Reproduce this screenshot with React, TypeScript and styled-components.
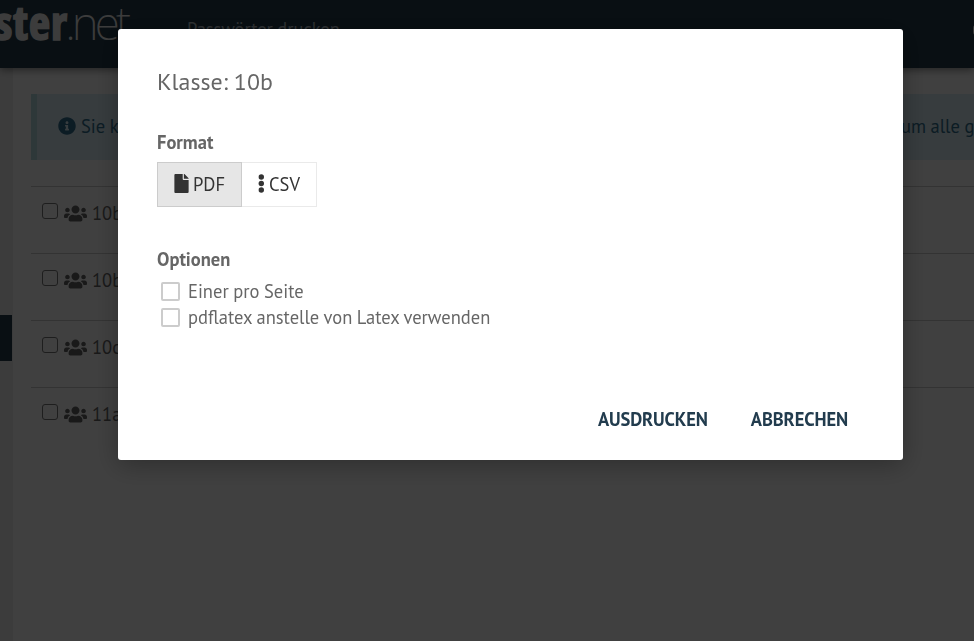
import React from "react";
import styled, { createGlobalStyle } from "styled-components";
import { FaUsers, FaFile, FaInfoCircle } from "react-icons/fa";

const GlobalStyle = createGlobalStyle`
  * { box-sizing: border-box; }
  html, body { margin: 0; height: 100%; overflow: hidden; background: #fff; }
  body, button { font-family: "PT Sans", "Open Sans", "Noto Sans", sans-serif; word-spacing: -0.4px; }
`;

const Page = styled.div`
  width: 974px;
  height: 641px;
  display: flex;
  flex-direction: column;
  overflow: hidden;
  color: #666;
`;

const Header = styled.header`
  height: 68px;
  flex: none;
  display: flex;
  align-items: flex-start;
  background: #243c4c;
  box-shadow: 0 2px 8px rgba(0, 0, 0, 0.45);
  z-index: 1;
  overflow: hidden;
`;

const Logo = styled.div`
  width: 136px;
  height: 48px;
  margin: -2px 0 0 -5px;
  flex: none;
  display: flex;
  font-family: "Open Sans", "Noto Sans", sans-serif;
  font-size: 46px;
  line-height: 48px;
  letter-spacing: 1.1px;
  font-stretch: 84%;
  color: #f0f0f0;
  font-weight: 700;
  -webkit-text-stroke: 1.6px #f0f0f0;
  white-space: nowrap;
`;

const LogoLight = styled.span`
  margin-left: -3px;
  font-family: "Noto Sans", "Open Sans", sans-serif;
  font-weight: 200;
  font-stretch: 75%;
  letter-spacing: -3.9px;
  -webkit-text-stroke: 0;
`;

const HeaderTitle = styled.div`
  margin: 16px 0 0 56px;
  font-size: 18.4px;
  line-height: 26px;
  color: #b8c4cc;
`;

const HeaderMark = styled.div`
  width: 10px;
  height: 10px;
  flex: none;
  margin: 25px -9px 0 auto;
  border-radius: 3px;
  background: #ddd;
`;

const Body = styled.div`
  flex: 1;
  display: flex;
`;

const Sidebar = styled.nav`
  width: 13px;
  flex: none;
  background: #f0f0f0;
  border-right: 1px solid #f0f0f0;
  padding-top: 247px;
`;

const ActiveItem = styled.div`
  width: 12px;
  height: 46px;
  background: #243c4c;
`;

const Main = styled.main`
  flex: 1;
  min-width: 0;
  padding: 26px 0 0 18px;
`;

const Alert = styled.div`
  height: 66px;
  display: flex;
  align-items: center;
  padding: 0 0 2px 21px;
  border-left: 6px solid #b8dfe2;
  background: #d9edf7;
  color: #31708f;
  font-size: 18.5px;
  white-space: nowrap;
  svg { width: 18px; height: 18px; margin-right: 5px; }
`;

const AlertEnd = styled.span`
  margin-left: auto;
  width: 73px;
`;

const List = styled.div`
  margin-top: 26px;
`;

const Row = styled.div`
  height: 67px;
  border-top: 1px solid #ccc;
  display: flex;
  align-items: flex-start;
  padding: 16px 0 0 11px;
  font-size: 18.5px;
  line-height: 20px;
  svg { width: 23px; height: 19px; margin: 1px 5px 0 6px; color: #666; }
`;

const RowCheck = styled.span`
  width: 16px;
  height: 16px;
  border: 1px solid #777;
  border-radius: 3px;
`;

const Backdrop = styled.div`
  position: fixed;
  inset: 0;
  z-index: 5;
  display: flex;
  align-items: flex-start;
  background: rgba(0, 0, 0, 0.75);
`;

const Dialog = styled.section`
  width: 785px;
  height: 431px;
  margin: 29px 0 0 118px;
  padding: 37px 39px 0;
  display: flex;
  flex-direction: column;
  border-radius: 3px;
  background: #fff;
  color: #666;
  box-shadow: 0 5px 26px rgba(0, 0, 0, 0.3);
`;

const Title = styled.h1`
  margin: 0;
  font-size: 23.9px;
  font-weight: 400;
  line-height: 32px;
`;

const Heading = styled.h2<{ $gap: number }>`
  margin: ${(p) => p.$gap}px 0 0;
  font-size: 18.5px;
  font-weight: 700;
  line-height: 24px;
`;

const Formats = styled.div`
  display: flex;
  margin-top: 8px;
`;

const FormatButton = styled.button<{ $active?: boolean }>`
  width: ${(p) => (p.$active ? 85 : 75)}px;
  height: 45px;
  padding: 0 0 2px 16px;
  display: flex;
  align-items: center;
  gap: 4px;
  border: 1px solid ${(p) => (p.$active ? "#ccc" : "#eaeaea")};
  border-left-width: ${(p) => (p.$active ? 1 : 0)}px;
  background: ${(p) => (p.$active ? "#e6e6e6" : "#fff")};
  color: #333;
  font-size: 18.5px;
`;

const FileIcon = styled(FaFile)`
  width: 15px;
  height: 19px;
`;

const Options = styled.div`
  margin-top: 7px;
`;

const Option = styled.label`
  height: 26px;
  display: flex;
  align-items: center;
  padding-left: 4px;
  gap: 8px;
  font-size: 18.5px;
`;

const Check = styled.span`
  width: 19px;
  height: 19px;
  border: 2px solid #ccc;
  border-radius: 2px;
`;

const Actions = styled.footer`
  display: flex;
  justify-content: flex-end;
  gap: 43px;
  margin-top: 77px;
  padding-right: 16px;
`;

const Action = styled.button`
  border: 0;
  padding: 0;
  background: none;
  color: #223c4e;
  font-size: 18.5px;
  letter-spacing: -0.1px;
  line-height: 24px;
  font-weight: 700;
`;

const Dots = () => (
  <svg width="7" height="19" viewBox="0 0 7 19" fill="currentColor">
    <circle cx="3.3" cy="3" r="2.7" />
    <circle cx="3.3" cy="9.5" r="2.7" />
    <circle cx="3.3" cy="16" r="2.7" />
  </svg>
);

const classes = ["10b", "10b", "10c", "11a"];

export default function App() {
  return (
    <>
      <GlobalStyle />
      <Page>
        <Header>
          <Logo>ster<LogoLight>.net</LogoLight></Logo>
          <HeaderTitle>Passwörter drucken</HeaderTitle>
          <HeaderMark />
        </Header>
        <Body>
          <Sidebar><ActiveItem /></Sidebar>
          <Main>
            <Alert>
              <FaInfoCircle />
              <span>Sie k</span>
              <AlertEnd>um alle g</AlertEnd>
            </Alert>
            <List>
              {classes.map((name, i) => (
                <Row key={i}><RowCheck /><FaUsers /><span>{name}</span></Row>
              ))}
            </List>
          </Main>
        </Body>
      </Page>
      <Backdrop>
        <Dialog role="dialog">
          <Title>Klasse: 10b</Title>
          <Heading $gap={32}>Format</Heading>
          <Formats>
            <FormatButton $active><FileIcon /><span>PDF</span></FormatButton>
            <FormatButton><Dots /><span>CSV</span></FormatButton>
          </Formats>
          <Heading $gap={40}>Optionen</Heading>
          <Options>
            <Option><Check /><span>Einer pro Seite</span></Option>
            <Option><Check /><span>pdflatex anstelle von Latex verwenden</span></Option>
          </Options>
          <Actions>
            <Action>AUSDRUCKEN</Action>
            <Action>ABBRECHEN</Action>
          </Actions>
        </Dialog>
      </Backdrop>
    </>
  );
}
